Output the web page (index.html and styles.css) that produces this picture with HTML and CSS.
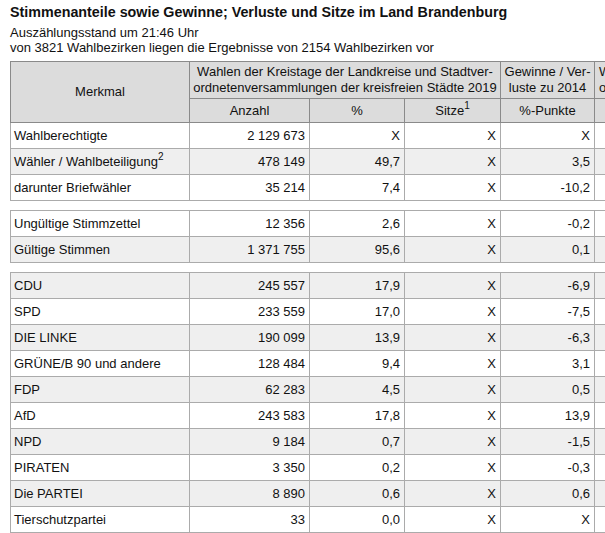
FILE: index.html
```html
<!DOCTYPE html>
<html lang="de">
<head>
<meta charset="utf-8">
<title>Stimmenanteile</title>
<link rel="stylesheet" href="styles.css">
</head>
<body>
<div class="page">
  <h1 class="title">Stimmenanteile sowie Gewinne; Verluste und Sitze im Land Brandenburg</h1>
  <p class="status">Auszählungsstand um 21:46 Uhr<br>von 3821 Wahlbezirken liegen die Ergebnisse von 2154 Wahlbezirken vor</p>
  <table class="results">
    <colgroup>
      <col class="c-label">
      <col class="c-num">
      <col class="c-pct">
      <col class="c-seats">
      <col class="c-diff">
      <col class="c-extra">
    </colgroup>
    <thead>
      <tr class="h1row">
        <th rowspan="2">Merkmal</th>
        <th colspan="3">Wahlen der Kreistage der Landkreise und Stadtver-<br>ordnetenversammlungen der kreisfreien Städte 2019</th>
        <th>Gewinne / Ver-<br>luste zu 2014</th>
        <th class="extra">Wahlen 2014<br>ohne Sitze</th>
      </tr>
      <tr class="h2row">
        <th>Anzahl</th>
        <th>%</th>
        <th>Sitze<sup>1</sup></th>
        <th>%-Punkte</th>
        <th>Anzahl</th>
      </tr>
    </thead>
    <tbody>
      <tr><td>Wahlberechtigte</td><td>2 129 673</td><td>X</td><td>X</td><td>X</td><td></td></tr>
      <tr class="alt"><td>Wähler / Wahlbeteiligung<sup>2</sup></td><td>478 149</td><td>49,7</td><td>X</td><td>3,5</td><td></td></tr>
      <tr><td>darunter Briefwähler</td><td>35 214</td><td>7,4</td><td>X</td><td>-10,2</td><td></td></tr>
      <tr class="gap"><td colspan="6"></td></tr>
      <tr><td>Ungültige Stimmzettel</td><td>12 356</td><td>2,6</td><td>X</td><td>-0,2</td><td></td></tr>
      <tr class="alt"><td>Gültige Stimmen</td><td>1 371 755</td><td>95,6</td><td>X</td><td>0,1</td><td></td></tr>
      <tr class="gap"><td colspan="6"></td></tr>
      <tr class="alt"><td>CDU</td><td>245 557</td><td>17,9</td><td>X</td><td>-6,9</td><td></td></tr>
      <tr><td>SPD</td><td>233 559</td><td>17,0</td><td>X</td><td>-7,5</td><td></td></tr>
      <tr class="alt"><td>DIE LINKE</td><td>190 099</td><td>13,9</td><td>X</td><td>-6,3</td><td></td></tr>
      <tr><td>GRÜNE/B 90 und andere</td><td>128 484</td><td>9,4</td><td>X</td><td>3,1</td><td></td></tr>
      <tr class="alt"><td>FDP</td><td>62 283</td><td>4,5</td><td>X</td><td>0,5</td><td></td></tr>
      <tr><td>AfD</td><td>243 583</td><td>17,8</td><td>X</td><td>13,9</td><td></td></tr>
      <tr class="alt"><td>NPD</td><td>9 184</td><td>0,7</td><td>X</td><td>-1,5</td><td></td></tr>
      <tr><td>PIRATEN</td><td>3 350</td><td>0,2</td><td>X</td><td>-0,3</td><td></td></tr>
      <tr class="alt"><td>Die PARTEI</td><td>8 890</td><td>0,6</td><td>X</td><td>0,6</td><td></td></tr>
      <tr><td>Tierschutzpartei</td><td>33</td><td>0,0</td><td>X</td><td>X</td><td></td></tr>
    </tbody>
  </table>
</div>
</body>
</html>
```

FILE: styles.css
```css
html, body {
  margin: 0;
  padding: 0;
  overflow: hidden;
  background: #fff;
}
body {
  font-family: "Liberation Sans", Arial, sans-serif;
  color: #111;
  font-size: 13px;
}
.page {
  padding: 4px 0 0 10px;
  width: 760px;
}
.title {
  font-size: 14.3px;
  font-weight: bold;
  margin: 0;
  line-height: 17px;
}
.status {
  margin: 4px 0 0 0;
  line-height: 15px;
  font-size: 13px;
}
.results {
  margin-top: 6px;
  border-collapse: collapse;
  table-layout: fixed;
  width: 700px;
  font-size: 13px;
}
.c-label { width: 179px; }
.c-num { width: 120px; }
.c-pct { width: 95px; }
.c-seats { width: 96px; }
.c-diff { width: 94px; }
.c-extra { width: 116px; }
.results th {
  background: #dcdcdc;
  font-weight: normal;
  border: 1px solid #8a8a8a;
  text-align: center;
  padding: 1px 3px;
  line-height: 16px;
}
.results th.extra {
  text-align: left;
  padding-left: 4px;
}
.h1row th { height: 34px; }
.h2row th { height: 21px; }
.results td {
  border: 1px solid #ababab;
  padding: 0 4px 0 3px;
  height: 25px;
  text-align: right;
  white-space: nowrap;
}
.results td:first-child {
  text-align: left;
}
.results tbody tr:first-child td { border-top-color: #7a7a7a; }
.results tr.alt td { background: #efefef; }
.results tr.gap td {
  height: 9px;
  padding: 0;
  border-left: none;
  border-right: none;
  background: #fff;
}
sup {
  font-size: 10px;
  line-height: 0;
  vertical-align: 6px;
}
```
